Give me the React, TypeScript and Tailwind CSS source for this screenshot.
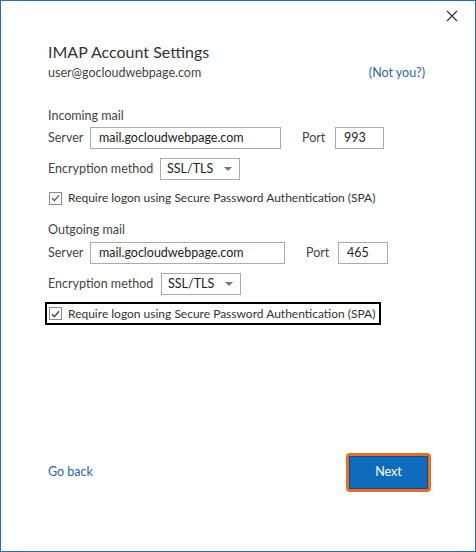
import React from 'react'

const font = { fontFamily: 'Lato, "Noto Sans", sans-serif' }

function Field({ value, className }: { value: string; className: string }) {
    return (
        <div className={`h-[22px] border border-[#ababab] bg-white flex items-center px-[8px] text-[12.5px] text-[#222] ${className}`}>
            {value}
        </div>
    )
}

function Select() {
    return (
        <div className="h-[22px] w-[80px] border border-[#ababab] flex items-center justify-between pl-[6px] pr-[7px] text-[12.5px] text-[#222]">
            <span>SSL/TLS</span>
            <svg width="8" height="4" viewBox="0 0 8 4">
                <path d="M0 0h8L4 4z" fill="#777" />
            </svg>
        </div>
    )
}

function Check({ label, stroke }: { label: string; stroke: string }) {
    return (
        <div className="flex items-center gap-[6px] text-[12px] text-[#333] whitespace-nowrap">
            <div className="w-[13px] h-[13px] border border-[#8c8c8c] bg-white flex items-center justify-center">
                <svg width="9" height="8" viewBox="0 0 9 8">
                    <path d="M1 4.2l2.4 2.4L8 1.2" fill="none" stroke={stroke} strokeWidth="1.4" />
                </svg>
            </div>
            <span>{label}</span>
        </div>
    )
}

export default function App(): JSX.Element {
    return (
        <div className="w-[476px] h-[552px] bg-white border border-[#1e6fc0] flex flex-col relative whitespace-nowrap" style={font}>
            <button className="absolute top-[9px] right-[17px] w-[12px] h-[12px]">
                <svg width="12" height="12" viewBox="0 0 12 12">
                    <path d="M1 1l10 10M11 1L1 11" stroke="#333" strokeWidth="1.2" />
                </svg>
            </button>
            <div className="pl-[47px] pr-[50px] pt-[39px] flex flex-col">
                <h1 className="text-[16px] leading-[24px] text-[#333]">IMAP Account Settings</h1>
                <div className="flex justify-between text-[12.5px] leading-[18px] text-[#444]">
                    <span>user@gocloudwebpage.com</span>
                    <span className="text-[#2e63a8]">(Not you?)</span>
                </div>

                <div className="mt-[25px] text-[12.5px] leading-[18px] text-[#444]">Incoming mail</div>
                <div className="flex items-center text-[12.5px] text-[#444] mt-[2px]">
                    <span className="w-[42px]">Server</span>
                    <Field value="mail.gocloudwebpage.com" className="w-[191px]" />
                    <span className="ml-[21px] w-[33px]">Port</span>
                    <Field value="993" className="w-[49px]" />
                </div>
                <div className="flex items-center text-[12.5px] text-[#444] mt-[9px]">
                    <span className="w-[112px]">Encryption method</span>
                    <Select />
                </div>
                <div className="mt-[9px] pl-[1px]">
                    <Check label="Require logon using Secure Password Authentication (SPA)" stroke="#6b6b6b" />
                </div>

                <div className="mt-[14px] text-[12.5px] leading-[18px] text-[#444]">Outgoing mail</div>
                <div className="flex items-center text-[12.5px] text-[#444] mt-[3px]">
                    <span className="w-[42px]">Server</span>
                    <Field value="mail.gocloudwebpage.com" className="w-[195px]" />
                    <span className="ml-[21px] w-[32px]">Port</span>
                    <Field value="465" className="w-[50px]" />
                </div>
                <div className="flex items-center text-[12.5px] text-[#444] mt-[9px]">
                    <span className="w-[113px]">Encryption method</span>
                    <Select />
                </div>
                <div className="mt-[7px] -ml-[3px] self-start border-2 border-black pl-[2px] pr-[4px] h-[23px] flex items-center">
                    <Check label="Require logon using Secure Password Authentication (SPA)" stroke="#2f4f73" />
                </div>
            </div>

            <div className="mt-auto mb-[59px] pl-[47px] pr-[44px] flex items-center justify-between">
                <span className="text-[12.5px] text-[#2e63a8]">Go back</span>
                <div className="rounded-[4px] border-[3px] border-[#f26b1d]">
                    <button className="w-[79px] h-[33px] bg-[#0f6cbd] border border-[#0a4f8f] text-white text-[12.5px]">
                        Next
                    </button>
                </div>
            </div>
        </div>
    )
}
